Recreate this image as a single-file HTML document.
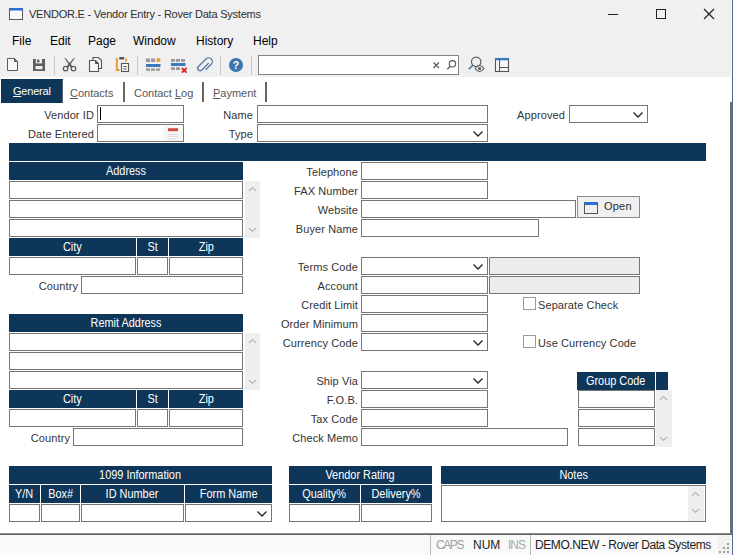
<!DOCTYPE html>
<html><head><meta charset="utf-8">
<style>
*{box-sizing:border-box;margin:0;padding:0}
html,body{width:733px;height:555px;overflow:hidden;background:#fff;font-family:"Liberation Sans",sans-serif}
.a{position:absolute}
#top{left:0;top:0;width:733px;height:77px;background:#f0f0f0}
.title{left:29px;top:8px;font-size:11px;letter-spacing:-0.22px;color:#2e2e2e;white-space:nowrap}
.menu{top:34px;font-size:12px;color:#000;white-space:nowrap}
.lbl{font-size:11px;letter-spacing:0.1px;color:#333;white-space:nowrap;text-align:right;height:18px;line-height:20px}
.in{border:1px solid #767676;background:#fff;height:18px}
.hd{background:#0e3658;color:#fff;font-size:12px;height:18px;line-height:18px;text-align:center;white-space:nowrap}
.hd span{display:inline-block;transform:scaleX(0.91)}
.tab{font-size:11px;color:#555;white-space:nowrap;top:87px}
.tsep{width:2px;background:#666;top:82px;height:20px}
.chev{position:absolute;right:4px;top:6px}
.sb{background:#efefef}
.gray{background:#ececec}
.btn{border:1px solid #8a8a8a;background:#f0f0f0}
.cb{width:13px;height:13px;border:1px solid #9a9a9a;background:#fff}
.st{top:538px;font-size:12px;white-space:nowrap}
u{text-decoration:underline;text-underline-offset:1px}
</style></head><body>
<div id="top" class="a"></div>
<div class="a title">VENDOR.E - Vendor Entry - Rover Data Systems</div>
<div class="a" style="left:608px;top:14px;width:10px;height:1px;background:#222"></div>
<div class="a" style="left:656px;top:9px;width:10px;height:10px;border:1px solid #222"></div>
<svg class="a" style="left:703px;top:8px" width="12" height="12"><path d="M1 1L11 11M11 1L1 11" stroke="#222" stroke-width="1.2"/></svg>

<div class="a menu" style="left:12px">File</div>
<div class="a menu" style="left:50px">Edit</div>
<div class="a menu" style="left:88px">Page</div>
<div class="a menu" style="left:133px">Window</div>
<div class="a menu" style="left:196px">History</div>
<div class="a menu" style="left:253px">Help</div>
<div class="a" style="left:258px;top:55px;width:201px;height:20px;border:1px solid #858585;background:#fff"></div>
<svg class="a" style="left:0;top:0" width="733" height="80">
<!-- window icon -->
<rect x="9.5" y="8.5" width="13" height="11" fill="#fafafa" stroke="#5a5a5a" stroke-width="1"/>
<rect x="9" y="8" width="14" height="2.5" fill="#2f6ccf"/>
<!-- new -->
<path d="M7.5 58.5H14.5L17.5 61.5V70.5H7.5Z" fill="#f7f7f7" stroke="#5c5c5c" stroke-width="1"/>
<path d="M14.5 58.5V61.5H17.5Z" fill="#5c5c5c" stroke="#5c5c5c" stroke-width="1"/>
<!-- save -->
<path d="M33 59H45V71H33Z" fill="#5e5e5e"/>
<rect x="35.8" y="59" width="6.2" height="4.4" fill="#f0f0f0"/>
<rect x="37" y="59.6" width="2.4" height="2.8" fill="#5e5e5e"/>
<rect x="35.5" y="66" width="7" height="3.2" fill="#f0f0f0"/>
<!-- scissors -->
<path d="M64.2 57.8L65.4 58L72.6 66.6L70.8 67.4Z" fill="#5a5a5a"/>
<path d="M75 57.8L73.8 58L66.6 66.6L68.4 67.4Z" fill="#5a5a5a"/>
<circle cx="65.6" cy="68.6" r="2.3" fill="#f0f0f0" stroke="#5a5a5a" stroke-width="1.2"/>
<circle cx="73.5" cy="68.6" r="2.3" fill="#f0f0f0" stroke="#5a5a5a" stroke-width="1.2"/>
<!-- copy -->
<path d="M93 57.5H98.5L101.5 60.5V68.5H93Z" fill="#f6f6f6" stroke="#555" stroke-width="1.1"/>
<path d="M89.5 60.5H95.5L98.5 63.5V71.5H89.5Z" fill="#f6f6f6" stroke="#555" stroke-width="1.1"/>
<path d="M95.5 60.5V63.5H98.5" fill="#555" stroke="#555"/>
<!-- paste -->
<path d="M116.8 58V70H119.5" stroke="#e8952f" stroke-width="1.8" fill="none"/>
<path d="M126 58.5V61.5" stroke="#e8952f" stroke-width="1.8"/>
<rect x="119.3" y="57" width="4.8" height="2.5" fill="#555"/>
<rect x="121.5" y="63.5" width="7" height="8" fill="#fafafa" stroke="#555" stroke-width="1.1"/>
<path d="M123.3 66.5H126.7M123.3 69H126.7" stroke="#555" stroke-width="1"/>
<!-- separators -->
<rect x="54" y="56" width="1" height="19" fill="#c6c6c6"/>
<rect x="137" y="56" width="1" height="19" fill="#c6c6c6"/>
<rect x="220" y="56" width="1" height="19" fill="#c6c6c6"/>
<rect x="251" y="56" width="1" height="19" fill="#c6c6c6"/>
<!-- insert row -->
<g fill="#9a9a9a"><rect x="146" y="58.5" width="4" height="3.5"/><rect x="151" y="58.5" width="4" height="3.5"/><rect x="146" y="68.3" width="4" height="2.5"/><rect x="151" y="68.3" width="4" height="2.5"/><rect x="156" y="68.3" width="4" height="2.5"/></g>
<rect x="156.5" y="58.2" width="3.8" height="3.8" fill="#e8a040"/>
<rect x="146" y="64" width="14.5" height="3" fill="#3a78c0"/>
<!-- delete row -->
<g fill="#9a9a9a"><rect x="171" y="59" width="4" height="2.8"/><rect x="176" y="59" width="4" height="2.8"/><rect x="181" y="59" width="4" height="2.8"/><rect x="171" y="67.2" width="4" height="2.8"/><rect x="176" y="67.2" width="4" height="2.8"/></g>
<rect x="171" y="63" width="14.5" height="3" fill="#3a78c0"/>
<path d="M181.8 68L186.6 72.6M186.6 68L181.8 72.6" stroke="#d42a2a" stroke-width="1.9"/>
<!-- paperclip -->
<path d="M4 3V-5.5A4 4 0 0 0 -4 -5.5V6A2.6 2.6 0 0 0 1.2 6V-4.5" fill="none" stroke="#5879a6" stroke-width="1.4" transform="translate(205,65.2) rotate(45) scale(0.93)"/>
<!-- help -->
<circle cx="236" cy="65" r="7" fill="#3d74b2"/>
<text x="236" y="69" font-family="Liberation Sans" font-size="10.5" font-weight="bold" fill="#fff" text-anchor="middle">?</text>
<!-- search x and magnifier -->
<path d="M433.5 62.5L439 68M439 62.5L433.5 68" stroke="#555" stroke-width="1.1"/>
<circle cx="452.5" cy="63.8" r="3.2" fill="none" stroke="#555" stroke-width="1.1"/>
<path d="M450.2 66.2L447.3 69.2" stroke="#555" stroke-width="1.3"/>
<!-- find eye -->
<circle cx="476.2" cy="61.8" r="4.7" fill="none" stroke="#5a5a5a" stroke-width="1.2"/>
<path d="M473 65.2L468.8 69.2" stroke="#5878a8" stroke-width="1.7"/>
<path d="M475.2 68.5C476.6 66.3 478 65.5 479.6 65.5S482.6 66.3 484 68.5C482.6 70.7 481.2 71.5 479.6 71.5S476.6 70.7 475.2 68.5Z" fill="#f4f4f4" stroke="#5a5a5a" stroke-width="1.1"/>
<circle cx="479.6" cy="68.5" r="1.6" fill="#555"/>
<!-- layout -->
<rect x="495.5" y="58.5" width="13" height="13" fill="#f6f6f6" stroke="#555" stroke-width="1.1"/>
<rect x="495" y="58" width="14" height="2.3" fill="#3a78c0"/>
<path d="M499.5 60V71.5M499.5 67.5H508.5" stroke="#555" stroke-width="1"/>
</svg>

<div class="a" style="left:1px;top:79px;width:62px;height:24px;background:#0e3658"></div>
<div class="a" style="left:62px;top:80px;width:1px;height:23px;background:#55657a"></div>
<div class="a tab" style="left:13px;top:85px;color:#fff;letter-spacing:-0.2px"><u>G</u>eneral</div>
<div class="a tab" style="left:70px"><u>C</u>ontacts</div>
<div class="a tsep" style="left:123px"></div>
<div class="a tab" style="left:134px">Contact <u>L</u>og</div>
<div class="a tsep" style="left:202px"></div>
<div class="a tab" style="left:213px"><u>P</u>ayment</div>
<div class="a tsep" style="left:265px"></div>
<div class="a" style="left:730px;top:102px;width:2px;height:431px;background:#6d6d6d"></div>
<div class="a lbl" style="left:-56px;width:150px;top:105px">Vendor ID</div>
<div class="a in" style="left:97px;top:105px;width:87px"><div class="a" style="left:2px;top:1px;width:1px;height:13px;background:#000"></div></div>
<div class="a lbl" style="left:-56px;width:150px;top:124px">Date Entered</div>
<div class="a in" style="left:97px;top:124px;width:87px"><svg class="a" style="left:65px;top:0px" width="20" height="16"><rect x="0.5" y="1" width="19" height="15" fill="#f5f5f5"/><rect x="5" y="3.2" width="10" height="3" fill="#d24a42"/><path d="M5 9.5H15M5 11.5H15M5 13.8H15" stroke="#dedede" stroke-width="1"/></svg></div>
<div class="a lbl" style="left:103px;width:150px;top:105px">Name</div>
<div class="a in" style="left:257px;top:105px;width:231px;height:18px"></div>
<div class="a lbl" style="left:103px;width:150px;top:124px">Type</div>
<div class="a in" style="left:257px;top:124px;width:231px"><svg class="chev" width="10" height="6"><path d="M0.5 0.5L5 5L9.5 0.5" fill="none" stroke="#222" stroke-width="1.3"/></svg></div>
<div class="a lbl" style="left:415px;width:150px;top:105px">Approved</div>
<div class="a in" style="left:569px;top:105px;width:79px"><svg class="chev" width="10" height="6"><path d="M0.5 0.5L5 5L9.5 0.5" fill="none" stroke="#222" stroke-width="1.3"/></svg></div>
<div class="a hd" style="left:9px;top:143px;width:697px;height:18px;line-height:18px"><span></span></div>
<div class="a hd" style="left:9px;top:162px;width:234px;height:18px;line-height:18px"><span>Address</span></div>
<div class="a in" style="left:9px;top:181px;width:234px;height:18px"></div>
<div class="a in" style="left:9px;top:200px;width:234px;height:18px"></div>
<div class="a in" style="left:9px;top:219px;width:234px;height:18px"></div>
<div class="a sb" style="left:245px;top:181px;width:15px;height:57px"><svg class="a" style="left:3px;top:5px" width="9" height="6"><path d="M1 5L4.5 1.5L8 5" fill="none" stroke="#b4b4b4" stroke-width="1.2"/></svg><svg class="a" style="left:3px;top:46px" width="9" height="6"><path d="M1 1L4.5 4.5L8 1" fill="none" stroke="#b4b4b4" stroke-width="1.2"/></svg></div>
<div class="a hd" style="left:9px;top:238px;width:127px;height:18px;line-height:18px"><span>City</span></div>
<div class="a hd" style="left:137px;top:238px;width:31px;height:18px;line-height:18px"><span>St</span></div>
<div class="a hd" style="left:169px;top:238px;width:74px;height:18px;line-height:18px"><span>Zip</span></div>
<div class="a in" style="left:9px;top:257px;width:127px;height:18px"></div>
<div class="a in" style="left:137px;top:257px;width:31px;height:18px"></div>
<div class="a in" style="left:169px;top:257px;width:74px;height:18px"></div>
<div class="a lbl" style="left:-72px;width:150px;top:276px">Country</div>
<div class="a in" style="left:81px;top:276px;width:162px;height:18px"></div>
<div class="a hd" style="left:9px;top:314px;width:234px;height:18px;line-height:18px"><span>Remit Address</span></div>
<div class="a in" style="left:9px;top:333px;width:234px;height:18px"></div>
<div class="a in" style="left:9px;top:352px;width:234px;height:18px"></div>
<div class="a in" style="left:9px;top:371px;width:234px;height:18px"></div>
<div class="a sb" style="left:245px;top:333px;width:15px;height:57px"><svg class="a" style="left:3px;top:5px" width="9" height="6"><path d="M1 5L4.5 1.5L8 5" fill="none" stroke="#b4b4b4" stroke-width="1.2"/></svg><svg class="a" style="left:3px;top:46px" width="9" height="6"><path d="M1 1L4.5 4.5L8 1" fill="none" stroke="#b4b4b4" stroke-width="1.2"/></svg></div>
<div class="a hd" style="left:9px;top:390px;width:127px;height:18px;line-height:18px"><span>City</span></div>
<div class="a hd" style="left:137px;top:390px;width:31px;height:18px;line-height:18px"><span>St</span></div>
<div class="a hd" style="left:169px;top:390px;width:74px;height:18px;line-height:18px"><span>Zip</span></div>
<div class="a in" style="left:9px;top:409px;width:127px;height:18px"></div>
<div class="a in" style="left:137px;top:409px;width:31px;height:18px"></div>
<div class="a in" style="left:169px;top:409px;width:74px;height:18px"></div>
<div class="a lbl" style="left:-80px;width:150px;top:428px">Country</div>
<div class="a in" style="left:73px;top:428px;width:170px;height:18px"></div>
<div class="a lbl" style="left:208px;width:150px;top:162px">Telephone</div>
<div class="a in" style="left:361px;top:162px;width:127px;height:18px"></div>
<div class="a lbl" style="left:208px;width:150px;top:181px">FAX Number</div>
<div class="a in" style="left:361px;top:181px;width:127px;height:18px"></div>
<div class="a lbl" style="left:208px;width:150px;top:200px">Website</div>
<div class="a in" style="left:361px;top:200px;width:215px;height:18px"></div>
<div class="a lbl" style="left:208px;width:150px;top:219px">Buyer Name</div>
<div class="a in" style="left:361px;top:219px;width:178px;height:18px"></div>
<div class="a lbl" style="left:208px;width:150px;top:257px">Terms Code</div>
<div class="a in" style="left:361px;top:257px;width:127px"><svg class="chev" width="10" height="6"><path d="M0.5 0.5L5 5L9.5 0.5" fill="none" stroke="#222" stroke-width="1.3"/></svg></div>
<div class="a lbl" style="left:208px;width:150px;top:276px">Account</div>
<div class="a in" style="left:361px;top:276px;width:127px;height:18px"></div>
<div class="a lbl" style="left:208px;width:150px;top:295px">Credit Limit</div>
<div class="a in" style="left:361px;top:295px;width:127px;height:18px"></div>
<div class="a lbl" style="left:208px;width:150px;top:314px">Order Minimum</div>
<div class="a in" style="left:361px;top:314px;width:127px;height:18px"></div>
<div class="a lbl" style="left:208px;width:150px;top:333px">Currency Code</div>
<div class="a in" style="left:361px;top:333px;width:127px"><svg class="chev" width="10" height="6"><path d="M0.5 0.5L5 5L9.5 0.5" fill="none" stroke="#222" stroke-width="1.3"/></svg></div>
<div class="a lbl" style="left:208px;width:150px;top:371px">Ship Via</div>
<div class="a in" style="left:361px;top:371px;width:127px"><svg class="chev" width="10" height="6"><path d="M0.5 0.5L5 5L9.5 0.5" fill="none" stroke="#222" stroke-width="1.3"/></svg></div>
<div class="a lbl" style="left:208px;width:150px;top:390px">F.O.B.</div>
<div class="a in" style="left:361px;top:390px;width:127px;height:18px"></div>
<div class="a lbl" style="left:208px;width:150px;top:409px">Tax Code</div>
<div class="a in" style="left:361px;top:409px;width:127px;height:18px"></div>
<div class="a lbl" style="left:208px;width:150px;top:428px">Check Memo</div>
<div class="a in" style="left:361px;top:428px;width:207px;height:18px"></div>
<div class="a in gray" style="left:489px;top:257px;width:151px;height:18px"></div>
<div class="a in gray" style="left:489px;top:276px;width:151px;height:18px"></div>
<div class="a btn" style="left:577px;top:196px;width:63px;height:22px"><div class="a" style="left:6px;top:5px;width:14px;height:12px;border:1px solid #555;border-top:3px solid #2f6ccf"></div><div class="a" style="left:26px;top:-1px;line-height:20px;font-size:11px;color:#2a2a2a;letter-spacing:0.2px">Open</div></div>
<div class="a cb" style="left:523px;top:297px"></div>
<div class="a lbl" style="left:538px;top:295px;text-align:left">Separate Check</div>
<div class="a cb" style="left:523px;top:335px"></div>
<div class="a lbl" style="left:538px;top:333px;text-align:left">Use Currency Code</div>
<div class="a hd" style="left:577px;top:372px;width:78px;height:18px;line-height:18px"><span>Group Code</span></div>
<div class="a hd" style="left:656px;top:372px;width:12px;height:18px;line-height:18px"><span></span></div>
<div class="a in" style="left:578px;top:390px;width:77px;height:18px"></div>
<div class="a in" style="left:578px;top:409px;width:77px;height:18px"></div>
<div class="a in" style="left:578px;top:428px;width:77px;height:18px"></div>
<div class="a sb" style="left:656px;top:390px;width:16px;height:57px"><svg class="a" style="left:3px;top:5px" width="9" height="6"><path d="M1 5L4.5 1.5L8 5" fill="none" stroke="#b4b4b4" stroke-width="1.2"/></svg><svg class="a" style="left:3px;top:46px" width="9" height="6"><path d="M1 1L4.5 4.5L8 1" fill="none" stroke="#b4b4b4" stroke-width="1.2"/></svg></div>
<div class="a hd" style="left:9px;top:466px;width:263px;height:18px;line-height:18px"><span>1099 Information</span></div>
<div class="a hd" style="left:9px;top:485px;width:31px;height:18px;line-height:18px"><span>Y/N</span></div>
<div class="a hd" style="left:41px;top:485px;width:39px;height:18px;line-height:18px"><span>Box#</span></div>
<div class="a hd" style="left:81px;top:485px;width:103px;height:18px;line-height:18px"><span>ID Number</span></div>
<div class="a hd" style="left:185px;top:485px;width:87px;height:18px;line-height:18px"><span>Form Name</span></div>
<div class="a in" style="left:9px;top:504px;width:31px;height:18px"></div>
<div class="a in" style="left:41px;top:504px;width:39px;height:18px"></div>
<div class="a in" style="left:81px;top:504px;width:103px;height:18px"></div>
<div class="a in" style="left:185px;top:504px;width:87px"><svg class="chev" width="10" height="6"><path d="M0.5 0.5L5 5L9.5 0.5" fill="none" stroke="#222" stroke-width="1.3"/></svg></div>
<div class="a hd" style="left:289px;top:466px;width:143px;height:18px;line-height:18px"><span>Vendor Rating</span></div>
<div class="a hd" style="left:289px;top:485px;width:71px;height:18px;line-height:18px"><span>Quality%</span></div>
<div class="a hd" style="left:361px;top:485px;width:71px;height:18px;line-height:18px"><span>Delivery%</span></div>
<div class="a in" style="left:289px;top:504px;width:71px;height:18px"></div>
<div class="a in" style="left:361px;top:504px;width:71px;height:18px"></div>
<div class="a hd" style="left:441px;top:466px;width:265px;height:18px;line-height:18px"><span>Notes</span></div>
<div class="a in" style="left:441px;top:485px;width:265px;height:37px"></div>
<div class="a sb" style="left:688px;top:486px;width:16px;height:35px"><svg class="a" style="left:3px;top:5px" width="9" height="6"><path d="M1 5L4.5 1.5L8 5" fill="none" stroke="#b4b4b4" stroke-width="1.2"/></svg><svg class="a" style="left:3px;top:22px" width="9" height="6"><path d="M1 1L4.5 4.5L8 1" fill="none" stroke="#b4b4b4" stroke-width="1.2"/></svg></div>
<div class="a" style="left:0;top:533px;width:733px;height:1px;background:#8c8c8c"></div>
<div class="a" style="left:0;top:534px;width:733px;height:1px;background:#666"></div>
<div class="a" style="left:0;top:535px;width:733px;height:20px;background:#f9f9f9"></div>
<div class="a" style="left:430px;top:535px;width:1px;height:20px;background:#b8b8b8"></div>
<div class="a st" style="left:436px;color:#a0a0a0;letter-spacing:-1.4px">CAPS</div>
<div class="a st" style="left:473px;color:#222">NUM</div>
<div class="a st" style="left:508px;color:#a8a8a8;letter-spacing:-1px">INS</div>
<div class="a" style="left:530px;top:535px;width:1px;height:20px;background:#b8b8b8"></div>
<div class="a st" style="left:535px;color:#222;letter-spacing:-0.42px">DEMO.NEW - Rover Data Systems</div>
<div class="a" style="left:718px;top:535px;width:13px;height:20px;background:#f1f1f1"></div>
<svg class="a" style="left:718px;top:541px" width="15" height="15"><g fill="#a0a0a0"><rect x="9" y="2" width="2" height="2"/><rect x="5" y="6" width="2" height="2"/><rect x="9" y="6" width="2" height="2"/><rect x="1" y="10" width="2" height="2"/><rect x="5" y="10" width="2" height="2"/><rect x="9" y="10" width="2" height="2"/></g></svg>
<div class="a" style="left:732px;top:0;width:1px;height:555px;background:#56679a"></div>
<div class="a" style="left:731px;top:0;width:1px;height:102px;background:#f8f8f8"></div>
</body></html>
